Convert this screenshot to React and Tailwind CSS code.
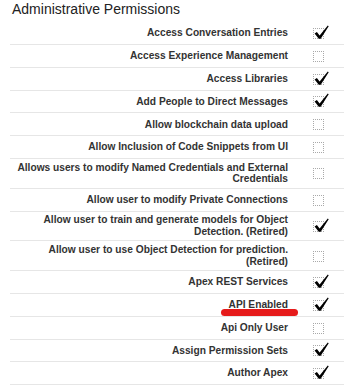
import React from "react";

const permissions = [
  ["Access Conversation Entries", true],
  ["Access Experience Management", false],
  ["Access Libraries", true],
  ["Add People to Direct Messages", true],
  ["Allow blockchain data upload", false],
  ["Allow Inclusion of Code Snippets from UI", false],
  ["Allows users to modify Named Credentials and External Credentials", false],
  ["Allow user to modify Private Connections", false],
  ["Allow user to train and generate models for Object Detection. (Retired)", true],
  ["Allow user to use Object Detection for prediction. (Retired)", false],
  ["Apex REST Services", true],
  ["API Enabled", true, true],
  ["Api Only User", false],
  ["Assign Permission Sets", true],
  ["Author Apex", true],
];

function Checkbox({ checked }) {
  return (
    <div className="relative w-[11px] h-[11px] border border-dotted border-[#a9a9a9]">
      {checked && (
        <svg
          className="absolute left-[-1px] top-[-4px]"
          width="17"
          height="16"
          viewBox="0 0 17 16"
        >
          <path
            d="M1.6 8.6 L3.9 7.1 L6.6 10.5 L14.8 0.5 L15.7 1.2 L7.7 13.8 L5.7 13.8 Z"
            fill="#000"
          />
        </svg>
      )}
    </div>
  );
}

export default function App() {
  return (
    <div
      className="w-[344px] h-[386px] bg-white pl-[10px] overflow-hidden"
      style={{ fontFamily: '"Liberation Sans", Arial, sans-serif' }}
    >
      <div className="h-[22.2px] pt-[1px] pl-[2px] text-[14px] leading-[16px] text-[#222]">
        Administrative Permissions
      </div>
      {permissions.map(([label, checked, marked]) => (
        <div
          key={label}
          className="flex items-center min-h-[22.8px] border-b border-[#e6e6e6]"
        >
          <div className="flex-1 text-right pl-[4px] pr-[2px] py-[2.9px] text-[10.2px] leading-[11.5px] font-bold text-[#333]">
            {marked ? (
              <span className="relative inline-block">
                {label}
                <span className="absolute left-[-8px] right-[-10px] top-[10px] h-[6.5px] rounded-full bg-[#e61b1b]" />
              </span>
            ) : (
              label
            )}
          </div>
          <div className="w-[54px] pl-[23px] pt-[1px]">
            <Checkbox checked={checked} />
          </div>
        </div>
      ))}
    </div>
  );
}
